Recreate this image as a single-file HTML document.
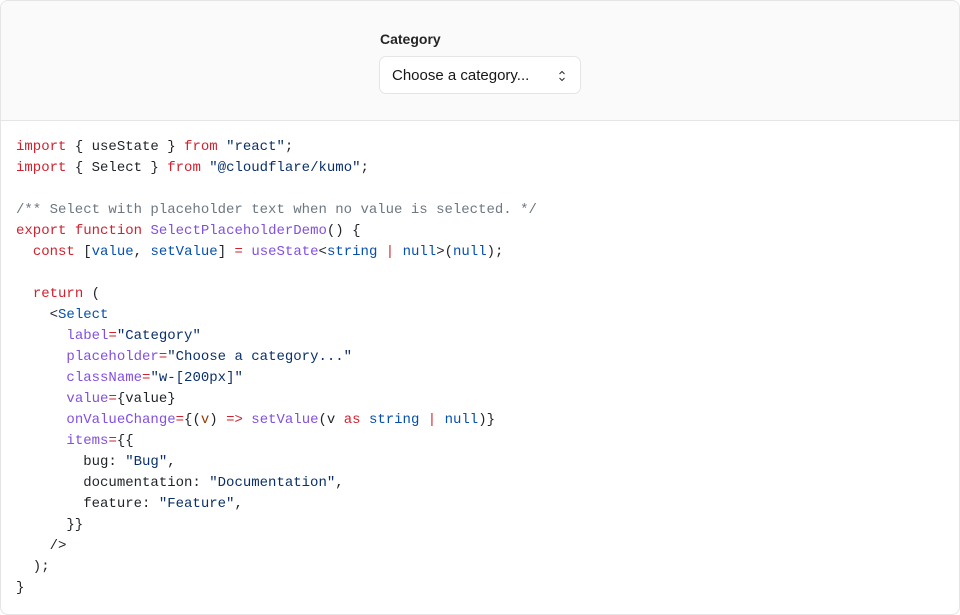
<html><head><style>
body{margin:0;background:#fff;font-family:"Liberation Sans",sans-serif}
.wrap{position:absolute;left:0;top:0;width:958px;height:613px;border:1px solid #e5e5e5;border-radius:8px;overflow:hidden;background:#fff}
.top{height:119px;background:#fafafa;border-bottom:1px solid #e5e5e5;position:relative}
.lbl{position:absolute;left:379px;top:30px;font-size:14px;font-weight:bold;color:#262626}
.sel{position:absolute;left:378px;top:55px;border:1px solid #e5e5e5;border-radius:7px;background:#fff;box-sizing:border-box;width:202px;height:38px}
.sel span{position:absolute;left:12px;top:10px;font-size:15px;color:#171717}
.sel svg{position:absolute;right:12px;top:12px}
pre{margin:0;position:absolute;left:15px;top:136px;font-family:"Liberation Mono",monospace;font-size:14px;line-height:21px;color:#1f2328}
.k{color:#cf222e}.s{color:#0a3069}.f{color:#8250df}.c{color:#6e7781}.n{color:#0550ae}.o{color:#953800}
</style></head><body><div class="wrap">
<div class="top"><div class="lbl">Category</div>
<div class="sel"><span>Choose a category...</span><svg width="12" height="14" viewBox="0 0 12 14"><path d="M3.5 5L6 2.5 8.5 5M3.5 9L6 11.5 8.5 9" fill="none" stroke="#333" stroke-width="1.1"/></svg></div></div>
<pre><span class="k">import</span> { useState } <span class="k">from</span> <span class="s">"react"</span>;
<span class="k">import</span> { Select } <span class="k">from</span> <span class="s">"@cloudflare/kumo"</span>;

<span class="c">/** Select with placeholder text when no value is selected. */</span>
<span class="k">export</span> <span class="k">function</span> <span class="f">SelectPlaceholderDemo</span>() {
  <span class="k">const</span> [<span class="n">value</span>, <span class="n">setValue</span>] <span class="k">=</span> <span class="f">useState</span>&lt;<span class="n">string</span> <span class="k">|</span> <span class="n">null</span>&gt;(<span class="n">null</span>);

  <span class="k">return</span> (
    &lt;<span class="n">Select</span>
      <span class="f">label</span><span class="k">=</span><span class="s">"Category"</span>
      <span class="f">placeholder</span><span class="k">=</span><span class="s">"Choose a category..."</span>
      <span class="f">className</span><span class="k">=</span><span class="s">"w-[200px]"</span>
      <span class="f">value</span><span class="k">=</span>{value}
      <span class="f">onValueChange</span><span class="k">=</span>{(<span class="o">v</span>) <span class="k">=&gt;</span> <span class="f">setValue</span>(v <span class="k">as</span> <span class="n">string</span> <span class="k">|</span> <span class="n">null</span>)}
      <span class="f">items</span><span class="k">=</span>{{
        bug: <span class="s">"Bug"</span>,
        documentation: <span class="s">"Documentation"</span>,
        feature: <span class="s">"Feature"</span>,
      }}
    /&gt;
  );
}</pre>
</div></body></html>
